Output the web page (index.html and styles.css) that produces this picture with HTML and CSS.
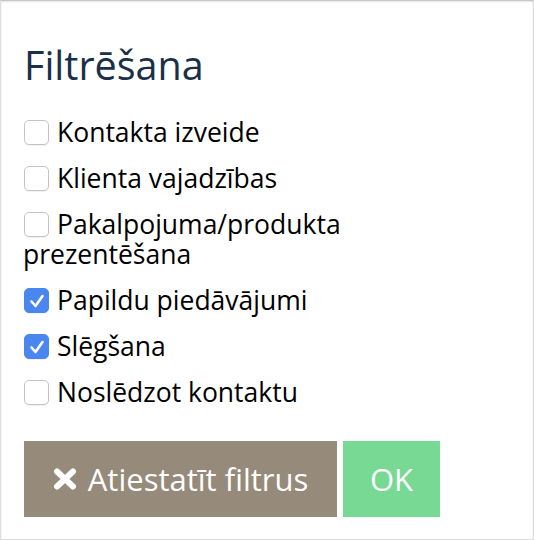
FILE: index.html
```
<!DOCTYPE html>
<html lang="lv">
<head>
<meta charset="utf-8">
<title>Filtrēšana</title>
<link rel="stylesheet" href="styles.css">
</head>
<body>
<div class="panel">
  <h2 class="title">Filtrēšana</h2>
  <ul class="filters">
    <li class="filter"><span class="box"></span>Kontakta izveide</li>
    <li class="filter"><span class="box"></span>Klienta vajadzības</li>
    <li class="filter"><span class="box"></span>Pakalpojuma/produkta prezentēšana</li>
    <li class="filter"><span class="box checked"><svg viewBox="0 0 24 24" width="24" height="24"><path d="M6.5 12.5 L10.5 17 L17.5 7" fill="none" stroke="#fff" stroke-width="2.6" stroke-linecap="round" stroke-linejoin="round"/></svg></span>Papildu piedāvājumi</li>
    <li class="filter"><span class="box checked"><svg viewBox="0 0 24 24" width="24" height="24"><path d="M6.5 12.5 L10.5 17 L17.5 7" fill="none" stroke="#fff" stroke-width="2.6" stroke-linecap="round" stroke-linejoin="round"/></svg></span>Slēgšana</li>
    <li class="filter"><span class="box"></span>Noslēdzot kontaktu</li>
  </ul>
  <div class="actions">
    <button class="btn btn-reset"><svg class="x-icon" viewBox="0 0 24 22" width="24" height="22"><path d="M4 3.5 L20 18.5 M20 3.5 L4 18.5" stroke="#fff" stroke-width="6" stroke-linecap="round"/></svg><span>Atiestatīt filtrus</span></button>
    <button class="btn btn-ok">OK</button>
  </div>
</div>
</body>
</html>
```
FILE: styles.css
```
html, body {
  margin: 0;
  padding: 0;
  background: #fff;
}
body {
  font-family: "Open Sans", "Noto Sans", sans-serif;
}
.panel {
  box-sizing: border-box;
  width: 534px;
  height: 540px;
  border: 1px solid #dedede;
  border-top-color: #c6c6c6;
  box-shadow: inset 0 1px 2px rgba(0, 0, 0, 0.12);
  padding: 0 22px;
  display: flex;
  flex-direction: column;
}
.title {
  margin: 43px 0 0 1px;
  font-size: 39.5px;
  line-height: 43px;
  font-weight: 400;
  color: #1a3047;
}
.filters {
  list-style: none;
  margin: 30px 0 0 0;
  padding: 0;
  width: 440px;
  display: flex;
  flex-direction: column;
  gap: 16px;
}
.filter {
  font-size: 26.5px;
  line-height: 30px;
  color: #000;
}
.box {
  display: inline-block;
  box-sizing: border-box;
  width: 25px;
  height: 25px;
  margin: 0 8px 0 1px;
  vertical-align: -3px;
  border: 1px solid #c4c4c4;
  border-radius: 5px;
  background: #fff;
  box-shadow: 0 1px 1px rgba(0, 0, 0, 0.06);
}
.box.checked {
  border-color: #4a86ef;
  background: #4a86ef;
}
.box.checked svg {
  display: block;
  margin: 0 0 0 -0.5px;
}
.actions {
  margin-top: 34px;
  display: flex;
  gap: 6px;
}
.btn {
  height: 76px;
  border: none;
  border-radius: 0;
  color: #fff;
  font-family: "Open Sans", "Noto Sans", sans-serif;
  font-size: 31px;
  display: flex;
  align-items: center;
  justify-content: center;
  padding: 0;
}
.btn-reset {
  width: 313px;
  margin-left: 1px;
  background: #968a7b;
  gap: 11px;
}
.btn-ok {
  width: 97px;
  background: #77d994;
}
.x-icon {
  display: block;
}
```
